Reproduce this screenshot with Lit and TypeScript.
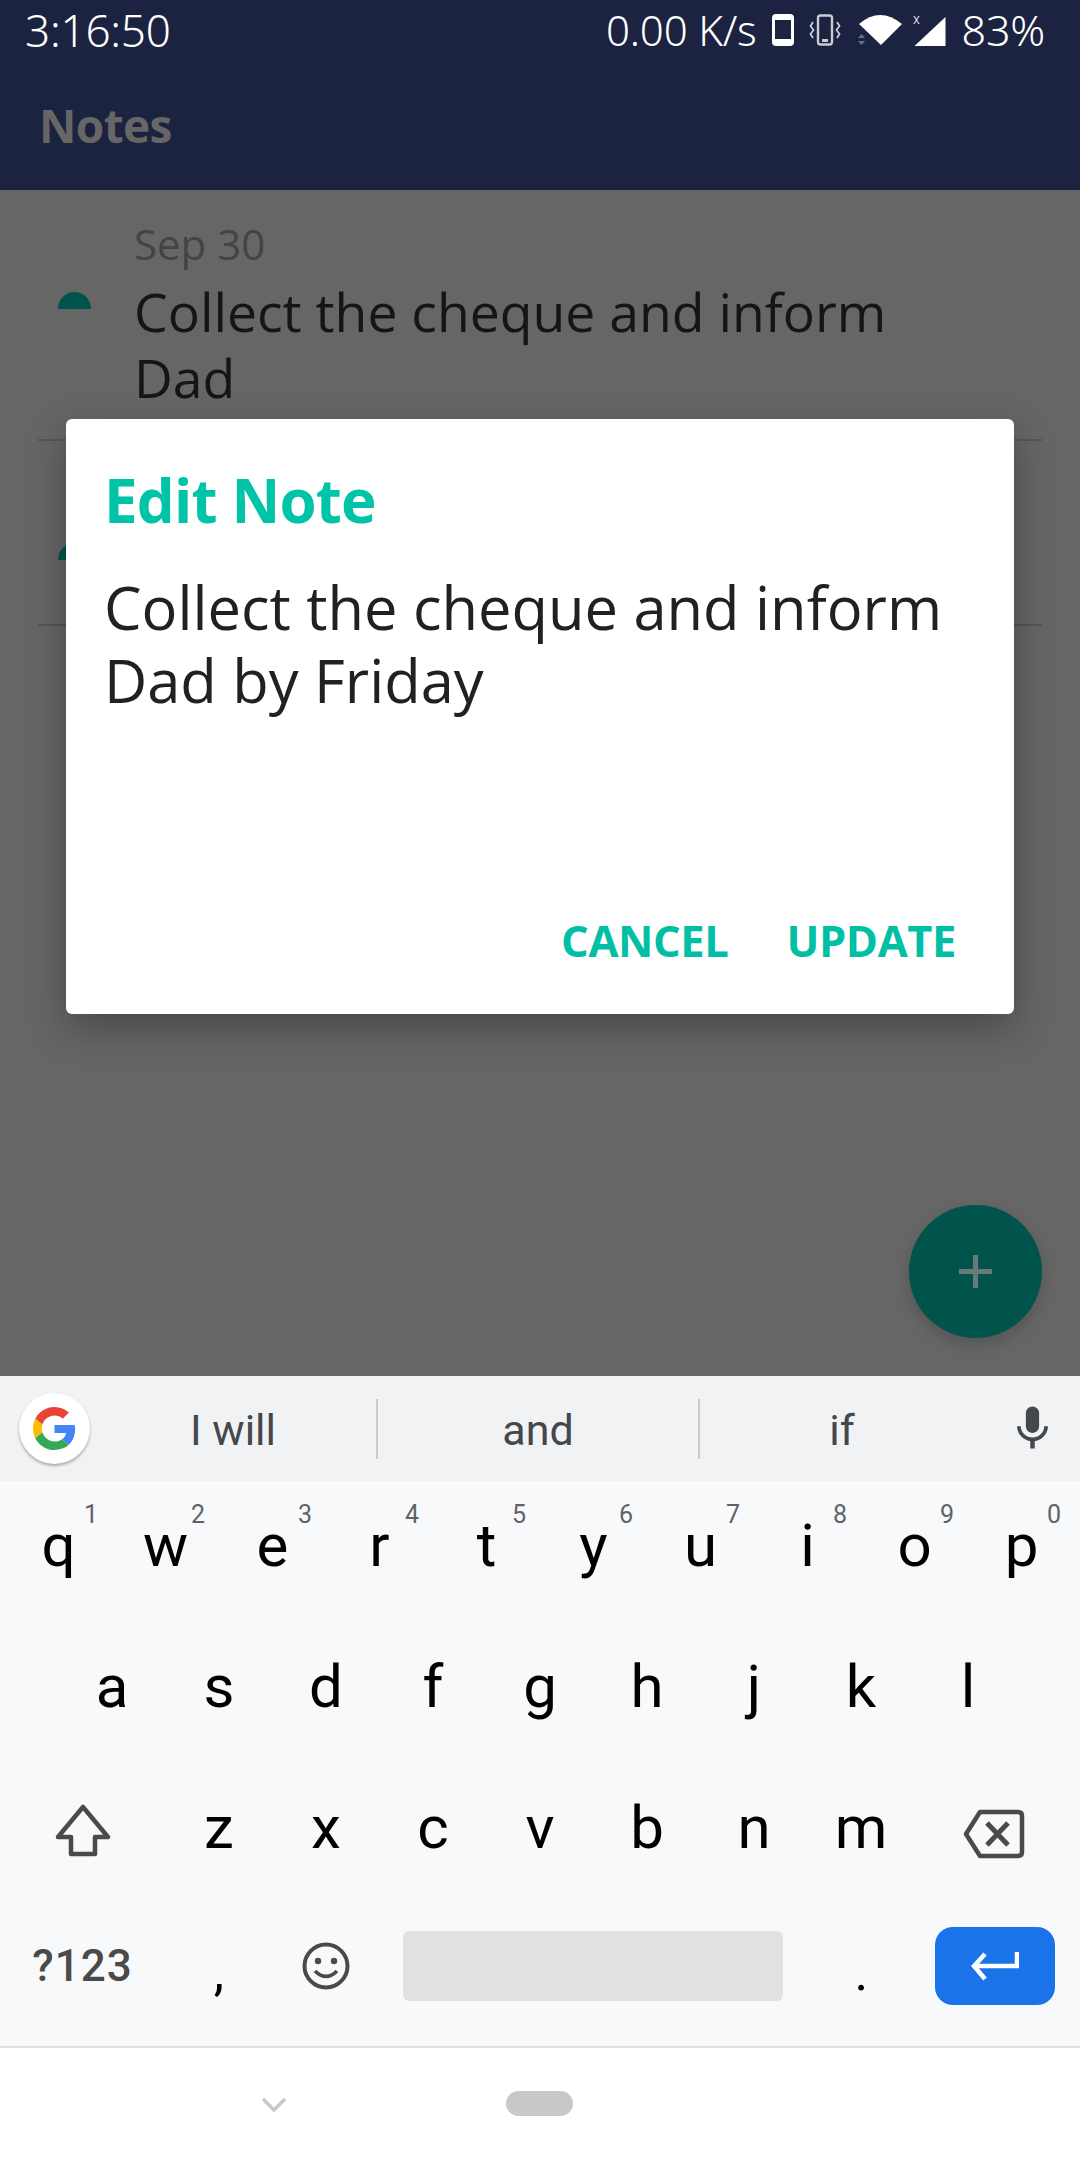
import { LitElement, css, html, svg } from 'lit'
import { customElement } from 'lit/decorators.js'

const ROW1 = [['q', '1'], ['w', '2'], ['e', '3'], ['r', '4'], ['t', '5'], ['y', '6'], ['u', '7'], ['i', '8'], ['o', '9'], ['p', '0']]
const ROW2 = ['a', 's', 'd', 'f', 'g', 'h', 'j', 'k', 'l']
const ROW3 = ['z', 'x', 'c', 'v', 'b', 'n', 'm']

const gLogo = svg`
  <path fill="#EA4335" d="M24 9.5c3.54 0 6.71 1.22 9.21 3.6l6.85-6.85C35.9 2.38 30.47 0 24 0 14.62 0 6.51 5.38 2.56 13.22l7.98 6.19C12.43 13.72 17.74 9.5 24 9.5z"/>
  <path fill="#4285F4" d="M46.98 24.55c0-1.57-.15-3.09-.38-4.55H24v9.02h12.94c-.58 2.96-2.26 5.48-4.78 7.18l7.73 6c4.51-4.18 7.09-10.36 7.09-17.65z"/>
  <path fill="#FBBC05" d="M10.53 28.59c-.48-1.45-.76-2.99-.76-4.59s.27-3.14.76-4.59l-7.98-6.19C.92 16.46 0 20.12 0 24c0 3.88.92 7.54 2.56 10.78l7.97-6.19z"/>
  <path fill="#34A853" d="M24 48c6.48 0 11.93-2.13 15.89-5.81l-7.73-6c-2.15 1.45-4.92 2.3-8.16 2.3-6.26 0-11.57-4.22-13.47-9.91l-7.98 6.19C6.51 42.62 14.62 48 24 48z"/>`

@customElement('app-root')
export class AppRoot extends LitElement {
  static styles = css`
    :host {
      display: flex;
      flex-direction: column;
      width: 1080px;
      height: 2160px;
      overflow: hidden;
      font-family: "Open Sans", "Noto Sans", sans-serif;
      background: #fff;
    }

    /* top */
    .header {
      height: 190px;
      background: #1c2340;
      flex: none;
    }
    .status {
      display: flex;
      align-items: center;
      height: 60px;
      padding: 0 35px 0 25px;
      color: #fff;
      font-size: 44px;
      line-height: 54px;
      font-family: "Noto Sans", sans-serif;
      font-weight: 300;
      letter-spacing: -0.2px;
    }
    .status .time { flex: 1; }
    .status .speed { font-size: 42px; margin-right: 15px; }
    .status svg { display: block; flex: none; }
    .status .pct { font-size: 43px; margin-left: 16px; }
    .title {
      padding: 33px 39px 0;
      color: #666;
      font-size: 46px;
      line-height: 64px;
      font-weight: 700;
      letter-spacing: -0.6px;
    }

    /* list behind dialog */
    .body {
      position: relative;
      flex: 1;
      background: #666;
    }
    .note {
      display: flex;
      padding: 26px 24px 0 58px;
      height: 249px;
      box-sizing: border-box;
    }
    .note.short { height: 183px; }
    .dot {
      width: 33px;
      height: 17px;
      margin-top: 76px;
      background: #00544b;
      border-radius: 17px 17px 0 0;
      flex: none;
    }
    .note-text { margin-left: 43px; }
    .date { color: #444; font-size: 42px; line-height: 56px; }
    .note-title { margin-top: 7px; color: #151515; font-size: 53.5px; line-height: 66px; width: 800px; }
    .sep {
      height: 2px;
      margin: 0 38px;
      background: #555;
    }

    .dialog {
      position: absolute;
      left: 66px;
      top: 229px;
      width: 948px;
      height: 595px;
      background: #fff;
      border-radius: 6px;
      box-shadow: 0 14px 40px rgba(0, 0, 0, 0.3);
      box-sizing: border-box;
      padding: 45px 38px 0;
      display: flex;
      flex-direction: column;
    }
    .dialog h2 {
      margin: 0;
      color: #00c4a7;
      font-size: 60px;
      line-height: 72px;
      font-weight: 700;
      letter-spacing: -0.8px;
    }
    .dialog p {
      margin: 34px 0 0;
      color: #212121;
      font-size: 59.6px;
      line-height: 73px;
      flex: 1;
    }
    .actions {
      display: flex;
      justify-content: flex-end;
      gap: 58px;
      padding: 0 20px 43px 0;
      color: #00bfa5;
      font-size: 43.5px;
      line-height: 60px;
      font-weight: 700;
      letter-spacing: -0.4px;
    }

    .fab {
      position: absolute;
      left: 909px;
      top: 1015px;
      width: 133px;
      height: 133px;
      border-radius: 50%;
      background: #00544b;
      box-shadow: 0 6px 16px rgba(0, 0, 0, 0.18);
      display: flex;
      align-items: center;
      justify-content: center;
    }

    /* keyboard */
    .suggest {
      display: flex;
      align-items: center;
      height: 105px;
      background: #f1f2f4;
      flex: none;
      font-family: Roboto, sans-serif;
      color: #44474b;
      font-size: 43px;
    }
    .g {
      width: 71px;
      height: 71px;
      margin-left: 19px;
      border-radius: 50%;
      background: #fff;
      box-shadow: 0 2px 3px rgba(0, 0, 0, 0.3);
      display: flex;
      align-items: center;
      justify-content: center;
      flex: none;
    }
    .word {
      text-align: center;
      line-height: 58px;
      padding-top: 2px;
      flex: none;
    }
    .word.w1 { width: 286px; }
    .word.w2 { width: 320px; border-left: 2px solid #c9cbcd; border-right: 2px solid #c9cbcd; }
    .word.w3 { width: 284px; }
    .mic { margin-left: 22px; flex: none; }
    .kbd {
      height: 565px;
      background: #f8f9fb;
      font-family: Roboto, sans-serif;
      color: #000;
      flex: none;
    }
    .row {
      display: flex;
      height: 141px;
      box-sizing: border-box;
      justify-content: center;
    }
    .row.last { padding-bottom: 18px; }
    .key {
      position: relative;
      width: 107px;
      box-sizing: border-box;
      padding-bottom: 12px;
      display: flex;
      align-items: center;
      justify-content: center;
      font-size: 60px;
      flex: none;
    }
    .key sup {
      position: absolute;
      top: 20px;
      right: 14px;
      font-size: 25px;
      line-height: 28px;
      color: #5f6368;
    }
    .wide { width: 165.5px; }
    .icon-key { padding-bottom: 0; }
    .shift { padding-bottom: 6px; }
    .sym { padding-bottom: 0; font-size: 44px; font-weight: 500; color: #4a4a4a; letter-spacing: 1px; }
    .punct { padding-top: 26px; font-size: 52px; }
    .period { width: 78px; }
    .space {
      width: 380px;
      height: 70px;
      margin: 0 39px 0 24px;
      align-self: center;
      background: #e0e2e1;
      border-radius: 6px;
      flex: none;
    }
    .enter {
      width: 120px;
      height: 78px;
      margin: 0 25px 0 35px;
      align-self: center;
      background: #1a73e8;
      border-radius: 18px;
      display: flex;
      align-items: center;
      justify-content: center;
      flex: none;
    }
    .nav {
      position: relative;
      height: 114px;
      box-sizing: border-box;
      flex: none;
      border-top: 2px solid #e2e2e2;
      background: #fff;
    }
    .chev { position: absolute; left: 261px; top: 49px; }
    .pill {
      position: absolute;
      left: 506px;
      top: 43px;
      width: 67px;
      height: 25px;
      border-radius: 12.5px;
      background: #c8c8c8;
    }
  `

  private statusIcons() {
    return html`
      <svg width="22" height="32" viewBox="0 0 22 32" style="margin-right:15px"><rect x="1.5" y="1.5" width="19" height="29" rx="2.5" fill="none" stroke="#fff" stroke-width="3"/><rect x="1" y="25" width="20" height="6" rx="2" fill="#fff"/><rect x="1" y="1" width="20" height="5" rx="2" fill="#fff"/></svg>
      <svg width="32" height="32" viewBox="0 0 32 32" style="margin-right:16px">
        <rect x="9" y="1.5" width="14" height="29" rx="2.5" fill="none" stroke="#c9cbd2" stroke-width="2.4"/>
        <rect x="13" y="25" width="6" height="3" fill="#c9cbd2"/>
        <path d="M4 8 L1.5 12 L4.5 16 L1.5 20 L4 24 M28 8 L30.5 12 L27.5 16 L30.5 20 L28 24" fill="none" stroke="#c9cbd2" stroke-width="1.8"/>
      </svg>
      <svg width="46" height="32" viewBox="0 0 46 32" style="margin-right:10px">
        <path d="M2 10 Q23 -8 45 10 L24 31 Z" fill="#fff"/>
        <path d="M1 24 L4.5 20 L8 24 Z M1 27 L8 27 L4.5 31 Z" fill="#6d7186"/>
      </svg>
      <svg width="33" height="33" viewBox="0 0 33 33">
        <path d="M32.5 3 V32 H1.5 Z" fill="#fff"/>
        <text x="0" y="10" font-size="14" fill="#fff" font-family="Roboto, sans-serif">x</text>
      </svg>
    `
  }

  private note(date: string, title: string, short = false) {
    return html`
      <div class="note ${short ? 'short' : ''}">
        <div class="dot"></div>
        <div class="note-text">
          <div class="date">${date}</div>
          <div class="note-title">${title}</div>
        </div>
      </div>
    `
  }

  private keyboard() {
    return html`
      <div class="kbd">
        <div class="row">
          ${ROW1.map(([k, n]) => html`<div class="key">${k}<sup>${n}</sup></div>`)}
        </div>
        <div class="row">
          ${ROW2.map((k) => html`<div class="key">${k}</div>`)}
        </div>
        <div class="row">
          <div class="key wide shift">
            <svg width="56" height="54" viewBox="0 0 56 54"><path d="M28 3 L53 33 H40 V50 H16 V33 H3 Z" fill="none" stroke="#4a4a4a" stroke-width="4.5" stroke-linejoin="round"/></svg>
          </div>
          ${ROW3.map((k) => html`<div class="key">${k}</div>`)}
          <div class="key wide icon-key">
            <svg width="62" height="50" viewBox="0 0 62 50" style="margin-left:-6px">
              <path d="M17 3 H55 Q59 3 59 7 V43 Q59 47 55 47 H17 L3 25 Z" fill="none" stroke="#4a4a4a" stroke-width="4.5" stroke-linejoin="round"/>
              <path d="M24 14 L45 36 M45 14 L24 36" fill="none" stroke="#4a4a4a" stroke-width="5"/>
            </svg>
          </div>
        </div>
        <div class="row last">
          <div class="key wide sym">?123</div>
          <div class="key punct">,</div>
          <div class="key icon-key">
            <svg width="48" height="48" viewBox="0 0 48 48">
              <circle cx="24" cy="24" r="21.5" fill="none" stroke="#4a4a4a" stroke-width="4"/>
              <circle cx="16" cy="19" r="3.2" fill="#4a4a4a"/><circle cx="32" cy="19" r="3.2" fill="#4a4a4a"/>
              <path d="M13 29 Q24 40 35 29" fill="none" stroke="#4a4a4a" stroke-width="3.6"/>
            </svg>
          </div>
          <div class="space"></div>
          <div class="key punct period">.</div>
          <div class="enter">
            <svg width="48" height="30" viewBox="0 0 48 30"><path d="M46 1 V15 H5 M14 3 L3 15 L14 28" fill="none" stroke="#fff" stroke-width="4.5"/></svg>
          </div>
        </div>
      </div>
    `
  }

  render() {
    return html`
      <div class="header">
        <div class="status">
          <span class="time">3:16:50</span>
          <span class="speed">0.00 K/s</span>
          ${this.statusIcons()}
          <span class="pct">83%</span>
        </div>
        <div class="title">Notes</div>
      </div>

      <div class="body">
        ${this.note('Sep 30', 'Collect the cheque and inform Dad')}
        <div class="sep"></div>
        ${this.note('', '', true)}
        <div class="sep"></div>

        <div class="dialog">
          <h2>Edit Note</h2>
          <p>Collect the cheque and inform<br />Dad by Friday</p>
          <div class="actions"><span>CANCEL</span><span>UPDATE</span></div>
        </div>

        <div class="fab">
          <svg width="33" height="33" viewBox="0 0 33 33"><path d="M14 0 H19 V14 H33 V19 H19 V33 H14 V19 H0 V14 H14 Z" fill="#6b7a77"/></svg>
        </div>
      </div>

      <div class="suggest">
        <div class="g"><svg width="43" height="43" viewBox="0 0 48 48">${gLogo}</svg></div>
        <div class="word w1">I will</div>
        <div class="word w2">and</div>
        <div class="word w3">if</div>
        <svg class="mic" width="53" height="53" viewBox="0 0 24 24"><path fill="#44474b" d="M12 14c1.66 0 2.99-1.34 2.99-3L15 5c0-1.66-1.34-3-3-3S9 3.34 9 5v6c0 1.66 1.34 3 3 3zm5.3-3c0 3-2.54 5.1-5.3 5.1S6.7 14 6.7 11H5c0 3.41 2.72 6.23 6 6.72V21h2v-3.28c3.28-.48 6-3.3 6-6.72h-1.7z"/></svg>
      </div>
      ${this.keyboard()}
      <div class="nav">
        <svg class="chev" width="26" height="16" viewBox="0 0 26 16"><path d="M2 2 L13 13 L24 2" fill="none" stroke="#c8c8c8" stroke-width="3.4"/></svg>
        <div class="pill"></div>
      </div>
    `
  }
}

declare global {
  interface HTMLElementTagNameMap {
    'app-root': AppRoot
  }
}
